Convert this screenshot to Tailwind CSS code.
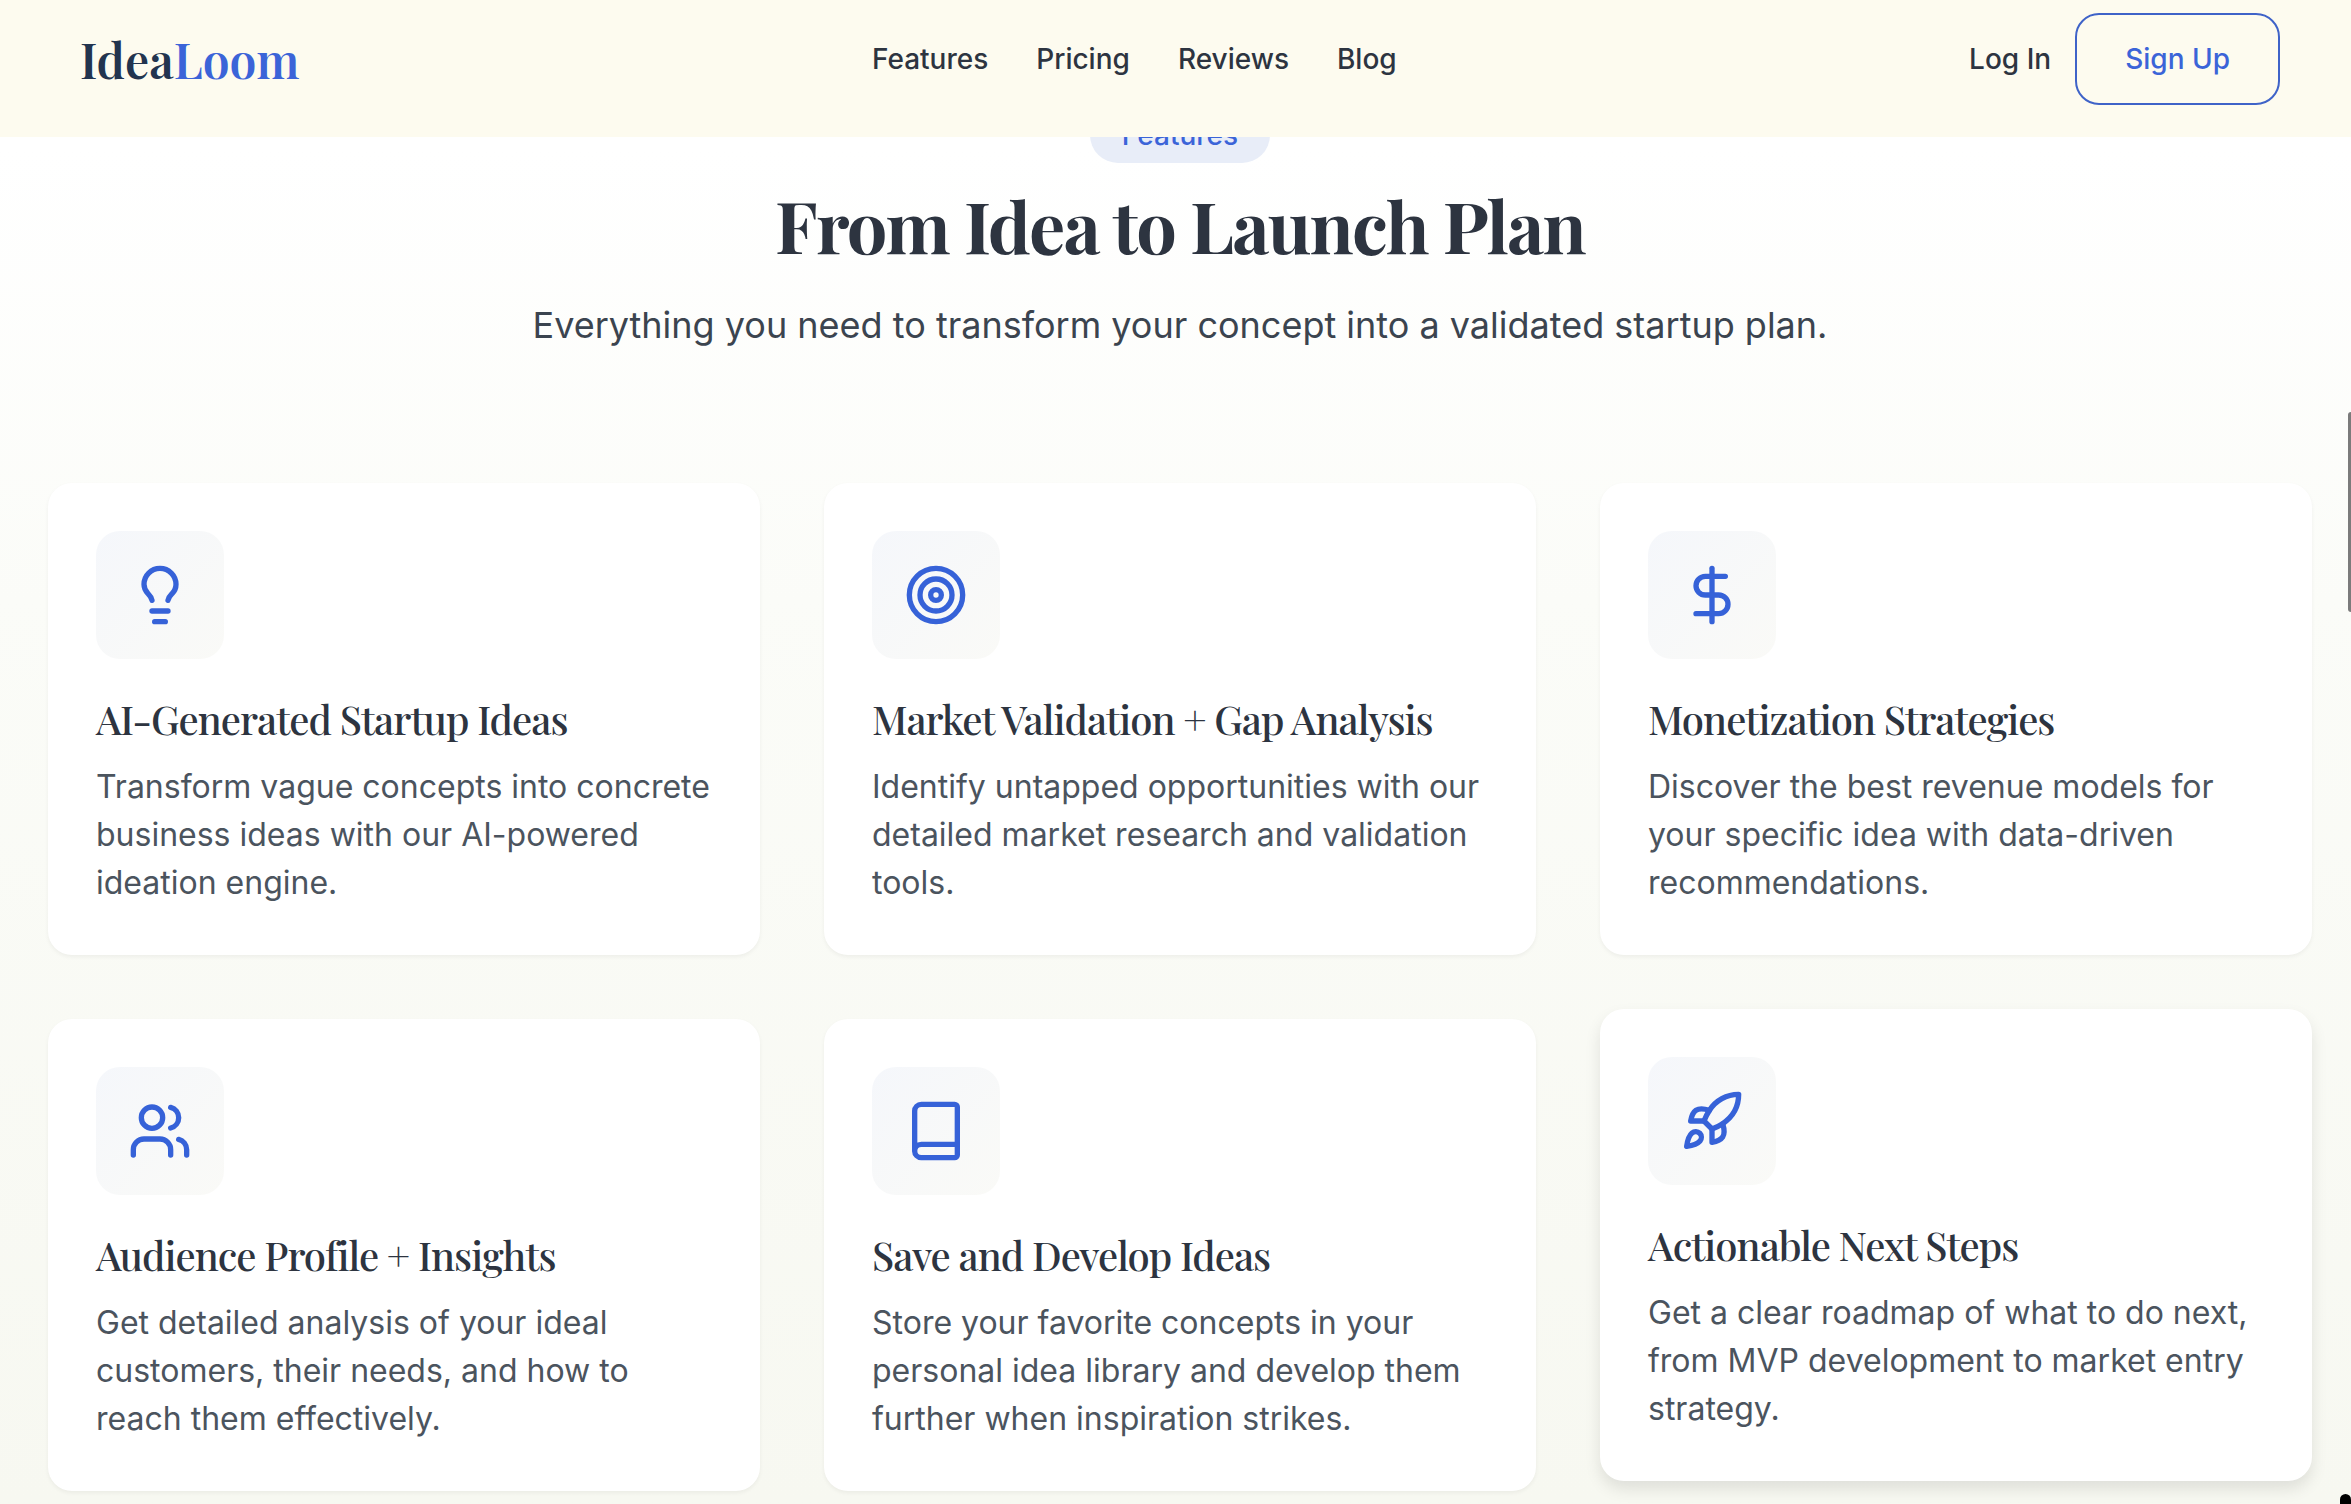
<!DOCTYPE html>
<html lang="en">
<head>
<meta charset="utf-8">
<meta name="viewport" content="width=device-width, initial-scale=1">
<title>IdeaLoom</title>
<script src="https://cdn.jsdelivr.net/npm/@tailwindcss/browser@4"></script>
</head>
<body class="h-screen overflow-hidden font-['Inter',sans-serif] text-[#2d3440]">

<header class="fixed inset-x-0 top-0 z-10 flex items-center justify-between bg-[#fdfbef] pt-[13px] pr-[71px] pb-8 pl-20 text-[28px] leading-10 font-medium">
  <a href="#" class="font-['Playfair_Display','Liberation_Serif',serif] text-5xl leading-[56px] font-semibold text-[#22344f]">Idea<span class="text-[#3b64d8]">Loom</span></a>
  <nav class="flex gap-12">
    <a href="#features">Features</a>
    <a href="#pricing">Pricing</a>
    <a href="#reviews">Reviews</a>
    <a href="#blog">Blog</a>
  </nav>
  <div class="flex items-center gap-6">
    <a href="#login">Log In</a>
    <button type="button" class="rounded-3xl border-2 border-[#3f63c8] px-12 py-6 font-medium text-[#3b64d8]">Sign Up</button>
  </div>
</header>

<main id="features" class="min-h-screen bg-linear-to-b from-white from-10% via-[#fbfcf8] via-40% to-[#f7f8f1] pt-[107px] pr-[39px] pl-12">
  <div class="flex flex-col items-center text-center">
    <span class="rounded-full bg-[#e8edf8] px-8 py-2 text-[28px] leading-10 font-medium text-[#3b64d8]">Features</span>
    <h2 class="mt-4 font-['Playfair_Display','Liberation_Serif',serif] text-7xl leading-[90px] font-bold tracking-tight">From Idea to Launch Plan</h2>
    <p class="mt-7 text-4xl leading-[56px] text-[#3b444f]">Everything you need to transform your concept into a validated startup plan.</p>
  </div>

  <div class="mt-[130px] grid grid-cols-3 gap-16">
    <article class="rounded-3xl bg-white p-12 shadow-[0_2px_4px_rgba(0,0,0,0.05)]">
      <div class="flex size-32 items-center justify-center rounded-3xl bg-linear-to-br from-[#f5f7fb] to-[#fafaf7] text-[#3662d8]">
        <svg class="size-16" viewBox="0 0 24 24" fill="none" stroke="currentColor" stroke-width="2" stroke-linecap="round" stroke-linejoin="round"><path d="M15 14c.2-1 .7-1.7 1.5-2.5 1-.9 1.5-2.2 1.5-3.5A6 6 0 0 0 6 8c0 1 .2 2.2 1.5 3.5.7.7 1.3 1.5 1.5 2.5"/><path d="M9 18h6"/><path d="M10 22h4"/></svg>
      </div>
      <h3 class="mt-8 font-['Playfair_Display','Liberation_Serif',serif] text-[40px] leading-[56px] font-medium tracking-tight">AI-Generated Startup Ideas</h3>
      <p class="mt-4 text-[32px] leading-12 text-[#4b545e]">Transform vague concepts into concrete business ideas with our AI-powered ideation engine.</p>
    </article>

    <article class="rounded-3xl bg-white p-12 shadow-[0_2px_4px_rgba(0,0,0,0.05)]">
      <div class="flex size-32 items-center justify-center rounded-3xl bg-linear-to-br from-[#f5f7fb] to-[#fafaf7] text-[#3662d8]">
        <svg class="size-16" viewBox="0 0 24 24" fill="none" stroke="currentColor" stroke-width="2" stroke-linecap="round" stroke-linejoin="round"><circle cx="12" cy="12" r="10"/><circle cx="12" cy="12" r="6"/><circle cx="12" cy="12" r="2"/></svg>
      </div>
      <h3 class="mt-8 font-['Playfair_Display','Liberation_Serif',serif] text-[40px] leading-[56px] font-medium tracking-tight">Market Validation + Gap Analysis</h3>
      <p class="mt-4 text-[32px] leading-12 text-[#4b545e]">Identify untapped opportunities with our detailed market research and validation tools.</p>
    </article>

    <article class="rounded-3xl bg-white p-12 shadow-[0_2px_4px_rgba(0,0,0,0.05)]">
      <div class="flex size-32 items-center justify-center rounded-3xl bg-linear-to-br from-[#f5f7fb] to-[#fafaf7] text-[#3662d8]">
        <svg class="size-16" viewBox="0 0 24 24" fill="none" stroke="currentColor" stroke-width="2" stroke-linecap="round" stroke-linejoin="round"><path d="M12 2v20"/><path d="M17 5H9.500a3.500 3.500 0 0 0 0 7h5a3.500 3.500 0 0 1 0 7H6"/></svg>
      </div>
      <h3 class="mt-8 font-['Playfair_Display','Liberation_Serif',serif] text-[40px] leading-[56px] font-medium tracking-tight">Monetization Strategies</h3>
      <p class="mt-4 text-[32px] leading-12 text-[#4b545e]">Discover the best revenue models for your specific idea with data-driven recommendations.</p>
    </article>

    <article class="rounded-3xl bg-white p-12 shadow-[0_2px_4px_rgba(0,0,0,0.05)]">
      <div class="flex size-32 items-center justify-center rounded-3xl bg-linear-to-br from-[#f5f7fb] to-[#fafaf7] text-[#3662d8]">
        <svg class="size-16" viewBox="0 0 24 24" fill="none" stroke="currentColor" stroke-width="2" stroke-linecap="round" stroke-linejoin="round"><path d="M16 21v-2a4 4 0 0 0-4-4H6a4 4 0 0 0-4 4v2"/><circle cx="9" cy="7" r="4"/><path d="M22 21v-2a4 4 0 0 0-3-3.870"/><path d="M16 3.130a4 4 0 0 1 0 7.750"/></svg>
      </div>
      <h3 class="mt-8 font-['Playfair_Display','Liberation_Serif',serif] text-[40px] leading-[56px] font-medium tracking-tight">Audience Profile + Insights</h3>
      <p class="mt-4 text-[32px] leading-12 text-[#4b545e]">Get detailed analysis of your ideal customers, their needs, and how to reach them effectively.</p>
    </article>

    <article class="rounded-3xl bg-white p-12 shadow-[0_2px_4px_rgba(0,0,0,0.05)]">
      <div class="flex size-32 items-center justify-center rounded-3xl bg-linear-to-br from-[#f5f7fb] to-[#fafaf7] text-[#3662d8]">
        <svg class="size-16" viewBox="0 0 24 24" fill="none" stroke="currentColor" stroke-width="2" stroke-linecap="round" stroke-linejoin="round"><path d="M4 19.500v-15A2.500 2.500 0 0 1 6.500 2H19a1 1 0 0 1 1 1v18a1 1 0 0 1-1 1H6.500a1 1 0 0 1 0-5H20"/></svg>
      </div>
      <h3 class="mt-8 font-['Playfair_Display','Liberation_Serif',serif] text-[40px] leading-[56px] font-medium tracking-tight">Save and Develop Ideas</h3>
      <p class="mt-4 text-[32px] leading-12 text-[#4b545e]">Store your favorite concepts in your personal idea library and develop them further when inspiration strikes.</p>
    </article>

    <!-- Raised (hovered) card -->
    <article class="-translate-y-2.5 rounded-3xl bg-white p-12 shadow-[0_8px_16px_rgba(0,0,0,0.10)]">
      <div class="flex size-32 items-center justify-center rounded-3xl bg-linear-to-br from-[#f5f7fb] to-[#fafaf7] text-[#3662d8]">
        <svg class="size-16" viewBox="0 0 24 24" fill="none" stroke="currentColor" stroke-width="2" stroke-linecap="round" stroke-linejoin="round"><path d="M4.500 16.500c-1.500 1.260-2 5-2 5s3.740-.5 5-2c.71-.84.7-2.130-.09-2.910a2.180 2.180 0 0 0-2.910-.09z"/><path d="m12 15-3-3a22 22 0 0 1 2-3.950A12.880 12.880 0 0 1 22 2c0 2.720-.78 7.500-6 11a22.350 22.350 0 0 1-4 2z"/><path d="M9 12H4s.55-3.030 2-4c1.620-1.080 5 0 5 0"/><path d="M12 15v5s3.030-.55 4-2c1.080-1.620 0-5 0-5"/></svg>
      </div>
      <h3 class="mt-8 font-['Playfair_Display','Liberation_Serif',serif] text-[40px] leading-[56px] font-medium tracking-tight">Actionable Next Steps</h3>
      <p class="mt-4 text-[32px] leading-12 text-[#4b545e]">Get a clear roadmap of what to do next, from MVP development to market entry strategy.</p>
    </article>
  </div>
</main>

<!-- Overlay scroll thumb -->
<div class="fixed top-[412px] right-0 z-20 h-[200px] w-[3px] rounded-l-sm bg-[#7b7b7b]"></div>
<!-- Pointer tip -->
<div class="fixed right-0 bottom-0 z-20 h-[10px] w-[11px] rounded-t-md bg-black"></div>
</body>
</html>
